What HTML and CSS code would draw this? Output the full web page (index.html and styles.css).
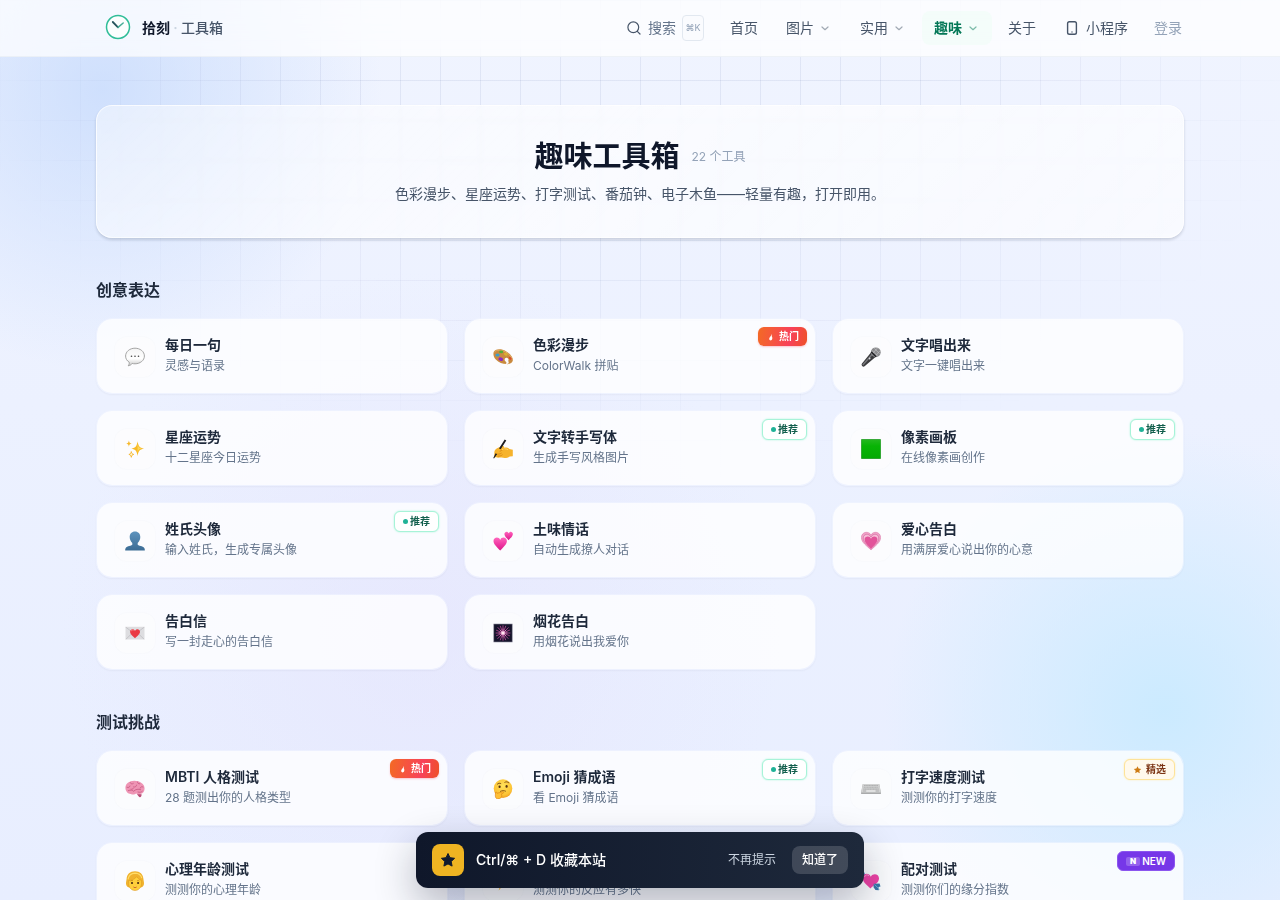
FILE: index.html
```html
<!DOCTYPE html>
<html lang="zh-CN">
<head>
<meta charset="utf-8">
<meta name="viewport" content="width=device-width, initial-scale=1">
<title>趣味工具箱 · 拾刻</title>
<link rel="stylesheet" href="styles.css">
</head>
<body>
<div class="backdrop" aria-hidden="true"><div class="backdrop-grid"></div></div>

<header class="site-header">
  <div class="header-inner">
    <a class="brand" href="#">
      <svg class="brand-mark" viewBox="0 0 28 28" fill="none" aria-hidden="true">
        <circle cx="14" cy="13" r="11.5" fill="#fbfefe" stroke="#2fbd98" stroke-width="1.5"/>
        <path d="M8.8 8l5.200 5.300" stroke="#27545d" stroke-width="1.800" stroke-linecap="round"/>
        <path d="M14 13.300l5.200-4.300" stroke="#46ad97" stroke-width="1.500" stroke-linecap="round"/>
      </svg>
      <span class="brand-name">拾刻</span><span class="brand-dot">·</span><span class="brand-sub">工具箱</span>
    </a>
    <nav class="nav" aria-label="主导航">
      <button class="nav-item search" type="button">
        <svg class="icon16" viewBox="0 0 16 16" fill="none" stroke="currentColor" stroke-width="1.2" stroke-linecap="round" aria-hidden="true"><circle cx="7.3" cy="7.3" r="5.4"/><path d="M11.3 11.3l2.700 2.700"/></svg>
        <span>搜索</span><kbd>⌘K</kbd>
      </button>
      <a class="nav-item" href="#">首页</a>
      <button class="nav-item" type="button">图片<svg class="chev" viewBox="0 0 14 14" aria-hidden="true"><path d="M4 6l3 2.700L10 6"/></svg></button>
      <button class="nav-item" type="button">实用<svg class="chev" viewBox="0 0 14 14" aria-hidden="true"><path d="M4 6l3 2.700L10 6"/></svg></button>
      <button class="nav-item active" type="button">趣味<svg class="chev" viewBox="0 0 14 14" aria-hidden="true"><path d="M4 6l3 2.700L10 6"/></svg></button>
      <a class="nav-item" href="#">关于</a>
      <a class="nav-item mini" href="#"><svg class="icon16" viewBox="0 0 16 16" fill="none" stroke="currentColor" stroke-width="1.4" aria-hidden="true"><rect x="3.600" y="1.800" width="8.800" height="12.400" rx="1.800"/><path d="M7.300 12h1.400" stroke-width="1"/></svg>小程序</a>
      <a class="nav-item login" href="#">登录</a>
    </nav>
  </div>
</header>

<main class="page">
  <section class="hero">
    <div class="hero-head"><h1>趣味工具箱</h1><span class="count">22 个工具</span></div>
    <p>色彩漫步、星座运势、打字测试、番茄钟、电子木鱼——轻量有趣，打开即用。</p>
  </section>

  <section class="group">
    <h2>创意表达</h2>
    <div class="cards">
      <a class="card" href="#">
        <span class="tile"><svg viewBox="0 0 20 20" aria-hidden="true"><defs><linearGradient id="g-bub" x1="0" y1="0" x2="0" y2="1"><stop offset="0" stop-color="#f4f4f4"/><stop offset=".6" stop-color="#fff"/><stop offset="1" stop-color="#c8c8c8"/></linearGradient></defs><path d="M10 1.2c5.2 0 9.4 3.4 9.4 7.8s-4.200 7.800-9.400 7.800c-1 0-2-.1-2.800-.4-.8 1.200-2.200 2.200-4 2.400.9-1 1.200-2.200 1-3.600C1.900 13.800.6 11.600.6 9 .6 4.600 4.800 1.200 10 1.200z" fill="url(#g-bub)" stroke="#9b9b9b" stroke-width=".9"/><g fill="#444"><circle cx="6.500" cy="9.200" r=".8"/><circle cx="10" cy="9.200" r=".8"/><circle cx="13.500" cy="9.200" r=".8"/></g></svg></span>
        <span class="info"><span class="name">每日一句</span><span class="desc">灵感与语录</span></span>
      </a>
      <a class="card" href="#">
        <span class="tile"><svg viewBox="0 0 20 20" aria-hidden="true"><path d="M1 4.600C3 1.600 8.500 1.600 13 4.200c4.500 2.500 7.300 6.400 6.800 9.400-.5 2.900-3.600 3.700-6.400 3.500-3.600-.2-7.800-1.500-10.600-4.600C.4 9.800-.2 6.600 1 4.600z" fill="#c98a3f"/><path d="M1.600 5C3.500 2.500 8.400 2.500 12.700 5c4 2.300 6.600 5.700 6.200 8" fill="none" stroke="#e2b06a" stroke-width="1"/><path d="M11.600 12.800c0-1.500 1.300-2.300 2.700-1.800 1.300.5 1.700 1.900.9 2.900.8.8.7 1.900-.1 2.900l-2.300.2c.9-1 .8-1.800.1-2.300-.8-.5-1.300-1-1.300-1.900z" fill="#fbfbfd"/><ellipse cx="4.500" cy="7.900" rx="2.100" ry="1.500" fill="#3a9dcd"/><ellipse cx="8.200" cy="4.900" rx="2" ry="1.300" fill="#4fae36"/><ellipse cx="12.800" cy="7.200" rx="2" ry="1.300" fill="#d9b02f" transform="rotate(20 12.800 7.200)"/><ellipse cx="7.800" cy="12.200" rx="2.400" ry="1.700" fill="#8d2ac0" transform="rotate(20 7.800 12.200)"/><ellipse cx="17.200" cy="11.300" rx="1.700" ry="1.100" fill="#d94d2b" transform="rotate(40 17.200 11.300)"/></svg></span>
        <span class="info"><span class="name">色彩漫步</span><span class="desc">ColorWalk 拼贴</span></span>
        <span class="badge hot"><svg viewBox="0 0 10 10" aria-hidden="true"><path d="M5.600 1.800c.3 1.500-.1 2 .4 2.900.7 1.100.4 3.500-1.400 3.700C3 8.400 2.800 6.500 3.800 5.300c.9-1.200 1.600-1.900 1.800-3.500z" fill="#fff"/></svg>热门</span>
      </a>
      <a class="card" href="#">
        <span class="tile"><svg viewBox="0 0 20 20" aria-hidden="true"><path d="M10.200 5.300l4.600 4.500L3.600 19.200c-.9.700-1.700.6-2.400-.2-.8-.9-.8-1.600-.2-2.500z" fill="#3b3b3e"/><path d="M10.200 5.300l1.600 1.500L1.800 18" stroke="#77787c" stroke-width="1.300" fill="none"/><circle cx="14.800" cy="5.300" r="4.900" fill="#8a8a8d"/><path d="M11 3.500l5.800 5.600M13.300 1.300l5.200 5.400M16.500 1l-5.300 6M19 3.800l-5 5.700" stroke="#c7c7ca" stroke-width=".6"/><path d="M10.300 5l4.800 4.800" stroke="#202024" stroke-width="1.500"/><circle cx="8.600" cy="11.500" r=".9" fill="#d9d9dc"/></svg></span>
        <span class="info"><span class="name">文字唱出来</span><span class="desc">文字一键唱出来</span></span>
      </a>
      <a class="card" href="#">
        <span class="tile"><svg viewBox="0 0 20 20" aria-hidden="true"><path d="M12.600 2.200c.8 5 1.800 6.300 6.400 7.400-4.600 1.200-5.600 2.500-6.400 7.500-.8-5-1.800-6.300-6.300-7.500 4.500-1.100 5.500-2.400 6.300-7.400z" fill="#f7ba25"/><path d="M12.600 4.500c.6 3.500 1.300 4.400 4.400 5.100-3.100.6-3.800 1.200-4.400 4z" fill="#fcd75e"/><path d="M3.900 1.400c.4 2.100.8 2.700 2.800 3.200-2 .5-2.400 1-2.800 3.200-.4-2.200-.8-2.700-2.700-3.200 1.900-.5 2.300-1.100 2.700-3.200z" fill="#f6b82b"/><path d="M6.300 12.600c.4 1.900.7 2.400 2.400 2.800-1.700.5-2 .9-2.400 2.900-.4-2-.7-2.400-2.400-2.900 1.700-.4 2-.9 2.400-2.800z" fill="#fff6d4" stroke="#f4b228" stroke-width=".9"/></svg></span>
        <span class="info"><span class="name">星座运势</span><span class="desc">十二星座今日运势</span></span>
      </a>
      <a class="card" href="#">
        <span class="tile"><svg viewBox="0 0 20 20" aria-hidden="true"><path d="M1.400 14.200c-.5-2.800 1.500-4.400 3.700-5.400 2.300-1.100 4.100-2.400 5.400-1.700.7.400.6 1.200.2 1.700 2-.5 4.300-.1 5.700 1.100l3.400.8v6.600l-3 .1c-2.400 1.800-5.400 2.100-8.200 1.200-2.400-.1-5.600.5-6.700-.8-.8-1-.8-2.400-.5-3.600z" fill="#f6b32c"/><path d="M7 12.300c1.600-1 3.200-2.300 4.800-2.300M3.300 15c1.800.4 3.600.2 5-.8M5 17.200c1.700 0 3.200-.4 4.300-1.300" fill="none" stroke="#d48412" stroke-width=".8" stroke-linecap="round"/><path d="M9 10.700c2-1 4.200-1.200 6 .1" fill="none" stroke="#ffd567" stroke-width="1"/><path d="M11.700.4l1.600 1-5.600 8.900-1.700-.9zM2.600 14.300l1.500 1L1 19.500.3 19z" fill="#1d1d20"/></svg></span>
        <span class="info"><span class="name">文字转手写体</span><span class="desc">生成手写风格图片</span></span>
        <span class="badge rec"><i></i>推荐</span>
      </a>
      <a class="card" href="#">
        <span class="tile"><svg viewBox="0 0 20 20" aria-hidden="true"><defs><linearGradient id="g-grn" x1="0" y1="0" x2="0" y2="1"><stop offset="0" stop-color="#26b820"/><stop offset=".35" stop-color="#08b405"/><stop offset="1" stop-color="#04a903"/></linearGradient></defs><rect x=".3" y=".3" width="19.400" height="19.400" rx=".8" fill="url(#g-grn)" stroke="#15891a" stroke-width=".6"/></svg></span>
        <span class="info"><span class="name">像素画板</span><span class="desc">在线像素画创作</span></span>
        <span class="badge rec"><i></i>推荐</span>
      </a>
      <a class="card" href="#">
        <span class="tile"><svg viewBox="0 0 20 20" aria-hidden="true"><defs><linearGradient id="g-usr" x1="0" y1="0" x2="0" y2="1"><stop offset="0" stop-color="#5d93bd"/><stop offset="1" stop-color="#3c6c94"/></linearGradient></defs><path d="M10 .4c3.200 0 5.300 2.200 5.300 5.700 0 2.300-1 4.600-2.600 5.900v1.800c.8 1.100 5.200 1.200 6.600 3.100.5.800.6 1.700.5 2.700H.2c-.1-1 0-1.900.5-2.700 1.400-1.900 5.800-2 6.600-3.100V12C5.700 10.700 4.700 8.400 4.700 6.100 4.700 2.600 6.800.4 10 .4z" fill="url(#g-usr)"/></svg></span>
        <span class="info"><span class="name">姓氏头像</span><span class="desc">输入姓氏，生成专属头像</span></span>
        <span class="badge rec"><i></i>推荐</span>
      </a>
      <a class="card" href="#">
        <span class="tile"><svg viewBox="0 0 20 20" aria-hidden="true"><defs><linearGradient id="g-pk" x1="0" y1="0" x2="0" y2="1"><stop offset="0" stop-color="#ff67bd"/><stop offset=".5" stop-color="#f03aa4"/><stop offset="1" stop-color="#d91b88"/></linearGradient></defs><path d="M7.200 19.600C4.300 16.400.5 13.400.5 10c0-3.800 5.200-4.900 6.700-1.100 1.500-3.800 6.700-2.700 6.700 1.100 0 3.400-3.800 6.400-6.700 9.600z" fill="url(#g-pk)"/><path d="M15.600 9.200c-2-2-4.200-3.900-4.200-6.100 0-2.700 3.400-3.400 4.300-.8.900-2.600 4.200-1.900 4.200.8 0 2.200-2.400 4.100-4.300 6.100z" fill="url(#g-pk)"/></svg></span>
        <span class="info"><span class="name">土味情话</span><span class="desc">自动生成撩人对话</span></span>
      </a>
      <a class="card" href="#">
        <span class="tile"><svg viewBox="0 0 20 20" aria-hidden="true"><path d="M10 19C5.800 14.700.4 11.700.4 6.500.4.900 7.700-.6 10 4c2.300-4.600 9.600-3.100 9.600 2.500C19.600 11.700 14.200 14.700 10 19z" fill="#f0a3c8" stroke="#d86ea3" stroke-width=".5"/><path d="M10 17.500C6.600 14 2.200 11.300 2.200 7c0-4.100 5.700-5.300 7.800-1 2.100-4.300 7.800-3.100 7.800 1 0 4.300-4.400 7-7.800 10.500z" fill="#f6bdd7" stroke="#cf5e98" stroke-width=".6"/><path d="M10 17.800C7 14.500 3.600 11.800 3.600 8.300c0-3 5-4 6.400-.5 1.400-3.500 6.400-2.500 6.400.5 0 3.500-3.400 6.200-6.400 9.500z" fill="#e2549a"/></svg></span>
        <span class="info"><span class="name">爱心告白</span><span class="desc">用满屏爱心说出你的心意</span></span>
      </a>
      <a class="card" href="#">
        <span class="tile"><svg viewBox="0 0 20 20" aria-hidden="true"><rect x=".5" y="3.800" width="19" height="12.800" rx=".5" fill="#dddde0"/><path d="M.8 4.200l9.200 7 9.200-7M.8 16.300l6.500-6.200M19.200 16.300l-6.500-6.200" fill="none" stroke="#b4b4b9" stroke-width=".6"/><path d="M10 15.300c-2-2.200-5-4.100-5-6.600 0-3 4-3.500 5-.8 1-2.700 5-2.200 5 .8 0 2.500-3 4.400-5 6.600z" fill="#ea3a43"/><path d="M6 8.400c.2-1.400 1.600-1.800 2.500-1" stroke="#ff8388" fill="none" stroke-width=".8"/></svg></span>
        <span class="info"><span class="name">告白信</span><span class="desc">写一封走心的告白信</span></span>
      </a>
      <a class="card" href="#">
        <span class="tile"><svg viewBox="0 0 20 20" aria-hidden="true"><rect x=".8" y="1" width="18.400" height="18" fill="#15142b" stroke="#8b8a9c" stroke-width=".6"/><g stroke="#b14390" stroke-width=".9" stroke-linecap="round"><path d="M10 2.700v14.600M3 10h14M5 4.600l10 10.800M15.200 4.700L4.800 15.500M7.300 3.200l5.300 13.600M12.700 3.200L7.300 16.900M3.500 7.300l13 5.400M3.500 12.700l13-5.500"/></g><g stroke="#ee96ce" stroke-width=".7"><path d="M10 5.600v8.800M5.600 10h8.800M7 7l6 6M13 7l-6 6"/></g><circle cx="10" cy="10" r="1.800" fill="#ffe5f1"/></svg></span>
        <span class="info"><span class="name">烟花告白</span><span class="desc">用烟花说出我爱你</span></span>
      </a>
    </div>
  </section>

  <section class="group">
    <h2>测试挑战</h2>
    <div class="cards">
      <a class="card" href="#">
        <span class="tile"><svg viewBox="0 0 20 20" aria-hidden="true"><path d="M12 15c1.200 1.600 1.600 3 2.700 3.200 1.400.2 2-1.500 1.900-3z" fill="#b94d77"/><path d="M.4 9C.3 4.800 4.300 1.800 9.300 1.800c5.600 0 10.300 3.100 10.300 7.800 0 3-1.600 5.200-4.600 5.500-1.800.2-2.900-.1-4-.6-1.200 1.300-3.700 1.500-5.200.4C3 15 .5 12.500.4 9z" fill="#ee94b4"/><path d="M2 8.300c1.600.6 2.700 0 3-1.300M5.300 3.700c.4 1.300 1.900 1.600 3 .8M8.500 8c1.700.4 3-.5 3.100-1.900M12.500 3c-.2 1.400 1 2 2.300 1.800M18 8c-1.300-.7-2.700-.1-2.900 1.200M3.300 11.600c2.500-.9 4.300-.4 5.400.7 1.700-2.100 4.700-2.600 7-1.600M6 10.200c1 .2 2-.1 2.400-.9M13 13c1.700.6 3.300.3 4.300-.7" fill="none" stroke="#c55881" stroke-width=".8" stroke-linecap="round"/></svg></span>
        <span class="info"><span class="name">MBTI 人格测试</span><span class="desc">28 题测出你的人格类型</span></span>
        <span class="badge hot"><svg viewBox="0 0 10 10" aria-hidden="true"><path d="M5.600 1.800c.3 1.500-.1 2 .4 2.900.7 1.100.4 3.500-1.400 3.700C3 8.400 2.800 6.500 3.800 5.300c.9-1.200 1.600-1.900 1.800-3.500z" fill="#fff"/></svg>热门</span>
      </a>
      <a class="card" href="#">
        <span class="tile"><svg viewBox="0 0 20 20" aria-hidden="true"><defs><radialGradient id="g-fc" cx=".5" cy=".35" r=".7"><stop offset="0" stop-color="#ffe25a"/><stop offset=".7" stop-color="#fcc335"/><stop offset="1" stop-color="#ec9420"/></radialGradient></defs><circle cx="10" cy="9.600" r="9.300" fill="url(#g-fc)"/><path d="M4.300 5.200c.9-1.100 2.300-1.300 3.500-.7M11.800 3.300c1.400-.9 3-.6 4 .5" fill="none" stroke="#7b4a12" stroke-width=".9" stroke-linecap="round"/><ellipse cx="6.600" cy="7.700" rx="1.100" ry="1.300" fill="#553211"/><ellipse cx="13.600" cy="7.400" rx="1.100" ry="1.300" fill="#553211"/><path d="M7.500 12.300c1.600-.8 3.500-.9 5-.2" fill="none" stroke="#7b4a12" stroke-width=".9" stroke-linecap="round"/><path d="M2.500 13.300c.9-.6 1.500.2 1.600 1l5.500-1.500c1.200-.2 1.500 1 .5 1.500l-2 .8c1.500 1.300.3 4.300-2.100 4.800-2.200.4-3.600-.9-3.700-2.900z" fill="#ffbf34" stroke="#d97e15" stroke-width=".6"/></svg></span>
        <span class="info"><span class="name">Emoji 猜成语</span><span class="desc">看 Emoji 猜成语</span></span>
        <span class="badge rec"><i></i>推荐</span>
      </a>
      <a class="card" href="#">
        <span class="tile"><svg viewBox="0 0 20 20" aria-hidden="true"><path d="M1.800 5h16.400l1.700 8.500v1.400H.1v-1.400z" fill="#a9aaab"/><path d="M1.800 5h16.400l1.700 8.500H.1z" fill="#d1d2d2"/><path d="M3 6.500h14M2.700 8.300h14.600M2.300 10.100h15.400" stroke="#b0b1b2" stroke-width="1.100" stroke-dasharray="1.300 .3"/><path d="M2 12h3M15 12h3" stroke="#b0b1b2" stroke-width="1"/><path d="M5.500 12h8.500" stroke="#eee" stroke-width="1"/></svg></span>
        <span class="info"><span class="name">打字速度测试</span><span class="desc">测测你的打字速度</span></span>
        <span class="badge pick"><svg viewBox="0 0 10 10" aria-hidden="true"><path d="M4.500 1.300l1.100 2.300 2.600.3-1.900 1.800.5 2.600-2.300-1.300-2.300 1.300.5-2.600L.8 3.900l2.600-.3z" fill="#ce7b13"/></svg>精选</span>
      </a>
      <a class="card" href="#">
        <span class="tile"><svg viewBox="0 0 20 20" aria-hidden="true"><path d="M10 .3c5.100 0 8.100 3 8.400 7.500.1 1.800.7 3.200.6 5-.1 2.300-1.700 3.600-3.800 3.700H4.800C2.700 16.400 1.100 15.100 1 12.800c-.1-1.800.5-3.200.6-5C1.900 3.300 4.900.3 10 .3z" fill="#f0b22e"/><path d="M3.700 9.600c3.500-.3 6.500-1.700 8-4 1 1.800 2.700 3.200 4.700 3.800v3.100c0 4-2.700 7-6.400 7s-6.300-3-6.300-7z" fill="#ffcf3c" stroke="#d8901c" stroke-width=".5"/><path d="M3 8.400C3.700 4.800 6.300 2.400 10 2.200c3.600.1 6 2 6.800 5" fill="none" stroke="#ffdc69" stroke-width="1.200"/><circle cx="7" cy="12" r="1.100" fill="#4c2d12"/><circle cx="13.100" cy="12" r="1.100" fill="#4c2d12"/><path d="M8.100 15.600c1.200.7 2.700.7 3.900 0-.4 1.700-3.500 1.700-3.900 0z" fill="#b93d26"/><path d="M5.600 10.100c.6-.6 1.600-.7 2.400-.3M12 9.800c.8-.4 1.800-.3 2.400.3" fill="none" stroke="#a76c13" stroke-width=".6"/></svg></span>
        <span class="info"><span class="name">心理年龄测试</span><span class="desc">测测你的心理年龄</span></span>
      </a>
      <a class="card" href="#">
        <span class="tile"><svg viewBox="0 0 20 20" aria-hidden="true"><path d="M12.500.5L3.500 11h5L5.600 19.500 16.500 7.500h-5.600z" fill="#f8b425"/></svg></span>
        <span class="info"><span class="name">反应速度测试</span><span class="desc">测测你的反应有多快</span></span>
      </a>
      <a class="card" href="#">
        <span class="tile"><svg viewBox="0 0 20 20" aria-hidden="true"><path d="M.3 1.200l3.200.3.600 2.800-1 1L.4 4z" fill="#4487b9"/><path d="M2.500 3.500l14 13" stroke="#4487b9" stroke-width="1.600"/><path d="M9.300 17.400C5.800 13.800 1.300 11 1.700 6.600c.5-4.700 6.600-5.100 8.100-.9 2.200-4 8.300-2.900 8.200 1.900-.1 4.300-5 6.700-8.700 9.800z" fill="#ed42a5"/><path d="M3.500 6c.7-2.300 3-2.700 4.500-1.300" fill="none" stroke="#ff9ad0" stroke-width="1"/><path d="M12.700 12.700l5.900-.2.900 3-2 .6.300 3.200-3.300-.4-2-2.700z" fill="#3976a8"/><path d="M13.600 13.500l5 5" stroke="#7fb4dc" stroke-width=".8"/></svg></span>
        <span class="info"><span class="name">配对测试</span><span class="desc">测测你们的缘分指数</span></span>
        <span class="badge new"><b>N</b>NEW</span>
      </a>
    </div>
  </section>
</main>

<aside class="toast" aria-label="收藏提示">
  <span class="toast-icon"><svg viewBox="0 0 20 20" aria-hidden="true"><path d="M10 3.500l2 4.200 4.600.6-3.400 3.200.9 4.600L10 13.900l-4.100 2.200.9-4.600-3.400-3.200 4.600-.6z" fill="#111a2e" stroke="#111a2e" stroke-width="1" stroke-linejoin="round"/></svg></span>
  <span class="toast-text">Ctrl/⌘ + D 收藏本站</span>
  <button class="toast-mute" type="button">不再提示</button>
  <button class="toast-ok" type="button">知道了</button>
</aside>
</body>
</html>
```
FILE: styles.css
```css
*, *::before, *::after { box-sizing: border-box; }

body {
  margin: 0;
  min-height: 100vh;
  font-family: Inter, "Noto Sans CJK SC", sans-serif;
  font-size: 14px;
  line-height: 20px;
  color: #0f172a;
  background: #eff3ff;
}

a { color: inherit; text-decoration: none; }
button { margin: 0; border: 0; background: none; font: inherit; color: inherit; cursor: pointer; }
h1, h2, p { margin: 0; }
svg { display: block; flex: none; }

.backdrop {
  position: fixed;
  inset: 0;
  z-index: -1;
  background:
    radial-gradient(circle 280px at 8% 10%, rgba(196, 217, 252, .75), rgba(196, 217, 252, 0)),
    radial-gradient(circle 280px at 91% 79%, rgba(200, 234, 255, .9), rgba(200, 234, 255, 0)),
    radial-gradient(circle 360px at 33% 70%, rgba(228, 226, 252, .55), rgba(228, 226, 252, 0)),
    linear-gradient(180deg, #f0f4ff 0%, #ecf1ff 45%, #e8eeff 100%);
}
.backdrop-grid {
  height: 100%;
  background-image:
    linear-gradient(to right, rgba(100, 116, 170, .11) 1px, transparent 1px),
    linear-gradient(to bottom, rgba(100, 116, 170, .11) 1px, transparent 1px);
  background-size: 40px 40px;
  -webkit-mask-image: radial-gradient(ellipse 60% 60% at 50% 0, #000 40%, transparent 90%);
  mask-image: radial-gradient(ellipse 60% 60% at 50% 0, #000 40%, transparent 90%);
}

.site-header {
  position: sticky;
  top: 0;
  z-index: 10;
  background: rgba(255, 255, 255, .72);
  backdrop-filter: blur(16px);
  border-bottom: 1px solid rgba(226, 232, 240, .5);
}
.header-inner {
  display: flex;
  align-items: center;
  justify-content: space-between;
  max-width: 1088px;
  height: 56px;
  margin: 0 auto;
  padding: 0 2px 0 8px;
}
.brand { display: flex; align-items: center; font-weight: 600; }
.brand-mark { width: 28px; height: 28px; margin-right: 10px; }
.brand-dot { width: 11px; text-align: center; color: #cbd5e1; }
.brand-sub { color: #475569; font-weight: 500; }

.nav { display: flex; align-items: center; gap: 4px; color: #475569; }
.nav-item {
  display: flex;
  align-items: center;
  gap: 4px;
  height: 34px;
  padding: 0 12px;
  border-radius: 8px;
}
.nav-item.search { gap: 6px; padding: 0 10px; color: #64748b; }
.nav-item.mini { gap: 6px; }
.nav-item.login { padding: 0 0 0 10px; color: #94a3b8; }
.nav-item.active { color: #047857; font-weight: 600; background: rgba(236, 253, 245, .45); }
.icon16 { width: 16px; height: 16px; color: #475569; }
.chev { width: 14px; height: 14px; fill: none; stroke: currentColor; stroke-width: 1.2; stroke-linecap: round; stroke-linejoin: round; opacity: .5; }
kbd {
  width: 22px;
  height: 26px;
  border: 1px solid #e2e8f0;
  border-radius: 4px;
  background: #fafbfe;
  font-family: inherit;
  font-size: 9px;
  line-height: 24px;
  text-align: center;
  color: #94a3b8;
}

.page { max-width: 1152px; margin: 0 auto; padding: 48px 32px 0; }
.hero {
  padding: 32px;
  border: 1px solid rgba(255, 255, 255, .7);
  border-radius: 16px;
  background: linear-gradient(135deg, rgba(255, 255, 255, .45), rgba(255, 255, 255, .68) 45%, rgba(255, 255, 255, .62));
  backdrop-filter: blur(2px);
  box-shadow: 0 2px 3px rgba(15, 23, 42, .16);
  text-align: center;
}
.hero-head { display: flex; align-items: center; justify-content: center; gap: 12px; }
h1 { font-size: 29px; line-height: 38px; font-weight: 700; }
.count { font-size: 12px; color: #94a3b8; }
.hero p { margin-top: 7px; line-height: 22px; color: #475569; }

.group { margin-top: 40px; }
h2 { margin-bottom: 16px; font-size: 16px; line-height: 24px; font-weight: 600; color: #1e293b; }
.cards { display: grid; grid-template-columns: repeat(3, minmax(0, 1fr)); gap: 16px; }
.card {
  position: relative;
  display: flex;
  gap: 10px;
  padding: 16px 18px;
  border: 1px solid rgba(241, 245, 255, .5);
  border-radius: 16px;
  background: rgba(255, 255, 255, .78);
  background-clip: padding-box;
  box-shadow: 0 1px 2px rgba(15, 23, 42, .04);
}
.tile {
  display: flex;
  align-items: center;
  justify-content: center;
  flex: none;
  width: 40px;
  height: 40px;
  margin-top: 2px;
  border-radius: 12px;
  background: rgba(252, 252, 254, .6);
  box-shadow: 0 0 2px rgba(15, 23, 42, .04);
}
.tile svg { width: 20px; height: 20px; }
.info { display: flex; flex-direction: column; gap: 3px; min-width: 0; }
.name { font-weight: 600; line-height: 20px; color: #1e293b; }
.desc { font-size: 12px; line-height: 16px; color: #64748b; }

.badge {
  position: absolute;
  top: 8px;
  right: 8px;
  display: flex;
  align-items: center;
  gap: 2px;
  height: 21px;
  padding: 0 8px;
  border: 1px solid transparent;
  border-radius: 6px;
  font-size: 10px;
  line-height: 19px;
  font-weight: 600;
}
.badge svg { width: 10px; height: 10px; }
.badge.hot { gap: 3px; height: 19px; border: 0; color: #fff; background: linear-gradient(100deg, #f36a24, #f8415a 65%, #ee5128); box-shadow: 0 1px 2px rgba(244, 63, 94, .3); }
.badge.rec { color: #115e4c; background: #fff; border-color: #a7f3d8; box-shadow: 0 0 2px #a7f3d8; }
.badge.rec i { width: 5px; height: 5px; border-radius: 50%; background: #20b297; }
.badge.pick { gap: 3px; color: #7c3514; background: #fff9ec; border-color: #fde399; box-shadow: 0 0 2px #fde8ae; }
.badge.new { height: 20px; color: #fff; background: #7637e8; border-color: #8b55ef; }
.badge.new b { width: 14px; border-radius: 2px; background: rgba(255, 255, 255, .22); font-size: 8px; line-height: 9px; text-align: center; }

.toast {
  position: fixed;
  left: 50%;
  bottom: 12px;
  z-index: 20;
  display: flex;
  align-items: center;
  width: 448px;
  max-width: calc(100% - 32px);
  padding: 12px 16px;
  border-radius: 12px;
  transform: translateX(-50%);
  color: #fff;
  background: linear-gradient(90deg, #0f172a, #1e293b);
  box-shadow: 0 16px 40px rgba(15, 23, 42, .3);
}
.toast-icon { display: flex; align-items: center; justify-content: center; width: 32px; height: 32px; border-radius: 8px; background: #efb422; }
.toast-icon svg { width: 20px; height: 20px; }
.toast-text { flex: 1; margin-left: 12px; font-weight: 500; }
.toast-mute { padding: 0; margin-right: 16px; font-size: 12px; color: #cbd5e1; }
.toast-ok { height: 28px; padding: 0 10px; border-radius: 8px; font-size: 12px; font-weight: 500; background: rgba(255, 255, 255, .16); }
```
